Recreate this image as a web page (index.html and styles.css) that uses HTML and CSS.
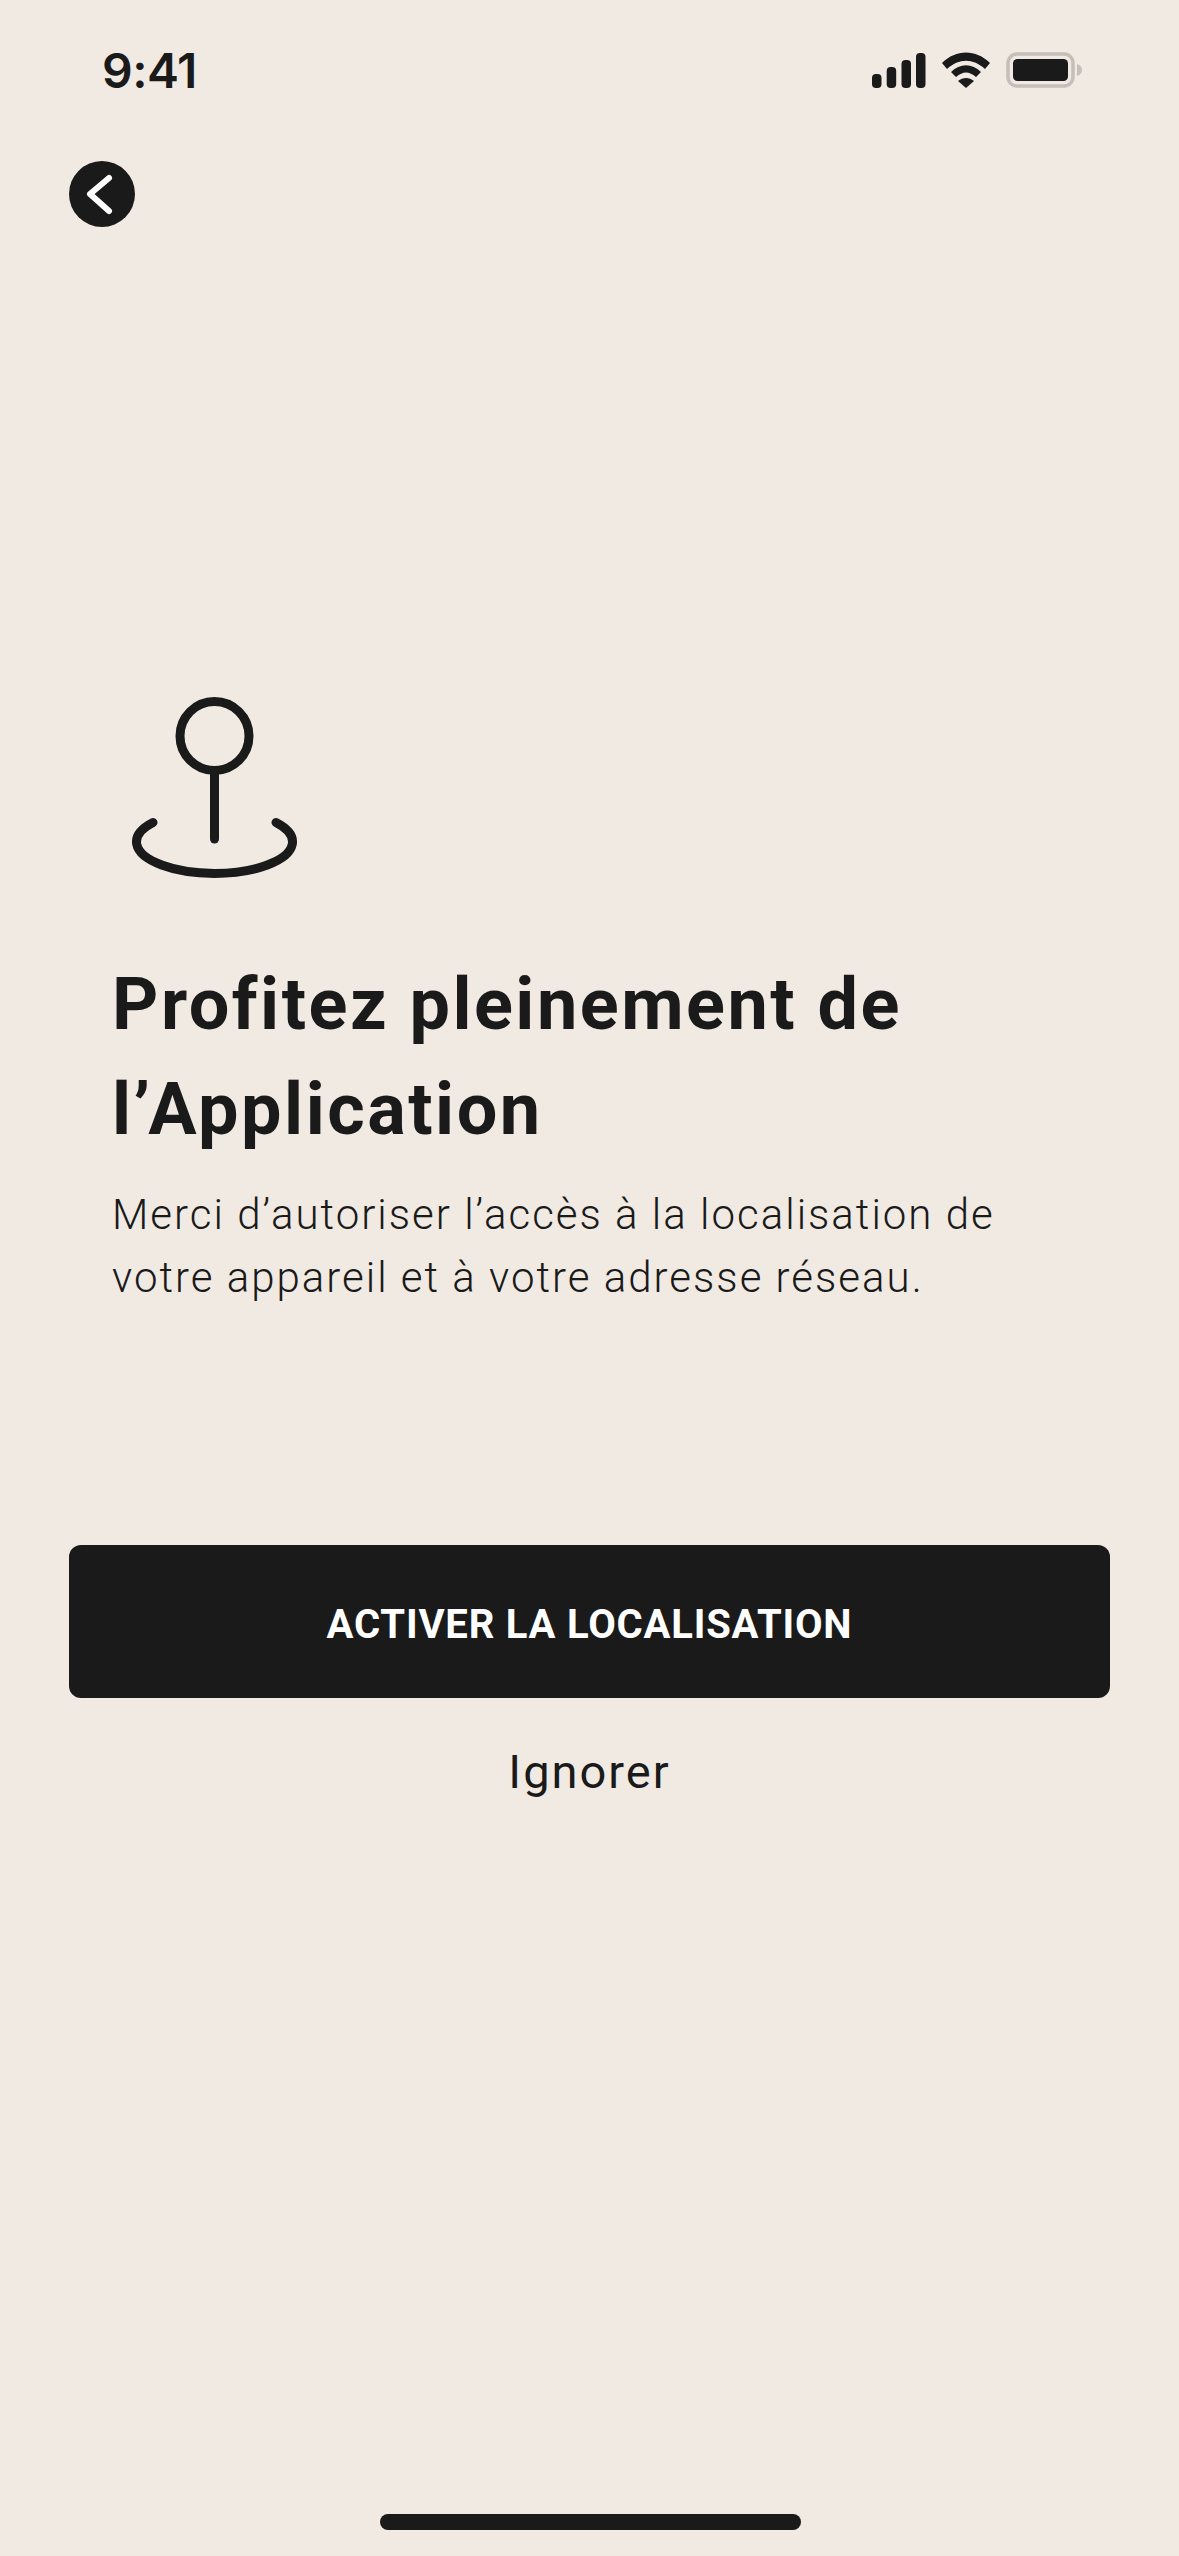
FILE: index.html
```html
<!DOCTYPE html>
<html>
<head>
  <title>Localisation</title>
  <link rel="stylesheet" href="styles.css">
</head>
<body>

  <div class="screen">
    <div class="status-bar">
      <span class="time">9:41</span>
      <div class="status-icons">
        <svg width="54" height="35" viewBox="0 0 54 35">
          <rect x="0" y="21" width="9.5" height="14" rx="4" fill="#1a1a1a"/>
          <rect x="14.7" y="14" width="9.5" height="21" rx="4" fill="#1a1a1a"/>
          <rect x="29.5" y="7" width="9.5" height="28" rx="4" fill="#1a1a1a"/>
          <rect x="44" y="0" width="9.5" height="35" rx="4" fill="#1a1a1a"/>
        </svg>
        <svg width="48" height="36" viewBox="0 0 48 36">
          <path d="M0 11 C14 -3 34 -3 48 11 L43 17 C31 6 17 6 5 17 Z" fill="#1a1a1a"/>
          <path d="M9 20 C18 11 30 11 39 20 L34 25 C27 19 21 19 14 25 Z" fill="#1a1a1a"/>
          <path d="M16 29 C21 25 27 25 32 29 L24 36 Z" fill="#1a1a1a"/>
        </svg>
        <svg width="76" height="36" viewBox="0 0 76 36">
          <rect x="2" y="2" width="65" height="32" rx="9" fill="none" stroke="#c5bfb9" stroke-width="3.5"/>
          <rect x="7" y="7" width="55" height="22" rx="4.5" fill="#1a1a1a"/>
          <path d="M71 12 C74 13 76 15 76 18 C76 21 74 23 71 24 Z" fill="#c5bfb9"/>
        </svg>
      </div>
    </div>

    <div class="back-btn">
      <svg width="66" height="66" viewBox="0 0 66 66">
        <path d="M40 17 L21 33 L40 50" fill="none" stroke="#fff" stroke-width="6" stroke-linecap="round" stroke-linejoin="round"/>
      </svg>
    </div>

    <div class="content">
      <svg class="pin" width="170" height="190" viewBox="0 0 170 190">
        <circle cx="83.5" cy="39" r="34.5" fill="none" stroke="#1a1a1a" stroke-width="9"/>
        <path d="M83.5 74 L83.5 142" fill="none" stroke="#1a1a1a" stroke-width="9" stroke-linecap="round"/>
        <path d="M22 125.5 A78 31.5 0 1 0 145 125.5" fill="none" stroke="#1a1a1a" stroke-width="9" stroke-linecap="round"/>
      </svg>
      <h1>Profitez pleinement de<br>l’Application</h1>
      <p>Merci d’autoriser l’accès à la localisation de<br>votre appareil et à votre adresse réseau.</p>
    </div>

    <div class="actions">
      <button class="primary">ACTIVER LA LOCALISATION</button>
      <div class="skip">Ignorer</div>
    </div>

    <div class="home-indicator"></div>
  </div>

</body>
</html>
```

FILE: styles.css
```css
body {
  margin: 0;
  background-color: #f0eae3;
  color: #1a1a1a;
  font-family: Roboto, sans-serif;
}

.screen {
  width: 1179px;
  height: 2556px;
  display: flex;
  flex-direction: column;
  overflow: hidden;
}

.status-bar {
  height: 140px;
  padding: 0 97px 0 102px;
  display: flex;
  justify-content: space-between;
  align-items: center;
}

.time {
  font-family: Inter, sans-serif;
  font-size: 48px;
  font-weight: 600;
  letter-spacing: -0.5px;
}

.status-icons {
  display: flex;
  align-items: center;
  gap: 16px;
}

.back-btn {
  width: 66px;
  height: 66px;
  margin: 21px 0 0 69px;
  border-radius: 50%;
  background-color: #1a1a1a;
}

.back-btn svg {
  display: block;
}

.content {
  margin-top: 470px;
  padding: 0 112px;
}

.pin {
  display: block;
  margin-left: 19px;
}

h1 {
  margin: 65px 0 0 0;
  font-size: 72px;
  font-weight: 700;
  line-height: 105px;
  letter-spacing: 2.5px;
}

p {
  margin: 21px 0 0 0;
  font-size: 42px;
  font-weight: 300;
  line-height: 63px;
  letter-spacing: 2px;
}

.actions {
  margin: 0 69px;
  padding-top: 236px;
}

.primary {
  display: block;
  width: 100%;
  height: 153px;
  padding: 6px 0 0 0;
  border: none;
  border-radius: 12px;
  background-color: #1a1a1a;
  color: #fff;
  font-family: Roboto, sans-serif;
  font-size: 40px;
  font-weight: 700;
  letter-spacing: 0.8px;
}

.skip {
  margin-top: 46px;
  text-align: center;
  font-size: 47px;
  letter-spacing: 2px;
}

.home-indicator {
  width: 421px;
  height: 16px;
  margin: auto 0 26px 380px;
  border-radius: 8px;
  background-color: #1a1a1a;
}
```
